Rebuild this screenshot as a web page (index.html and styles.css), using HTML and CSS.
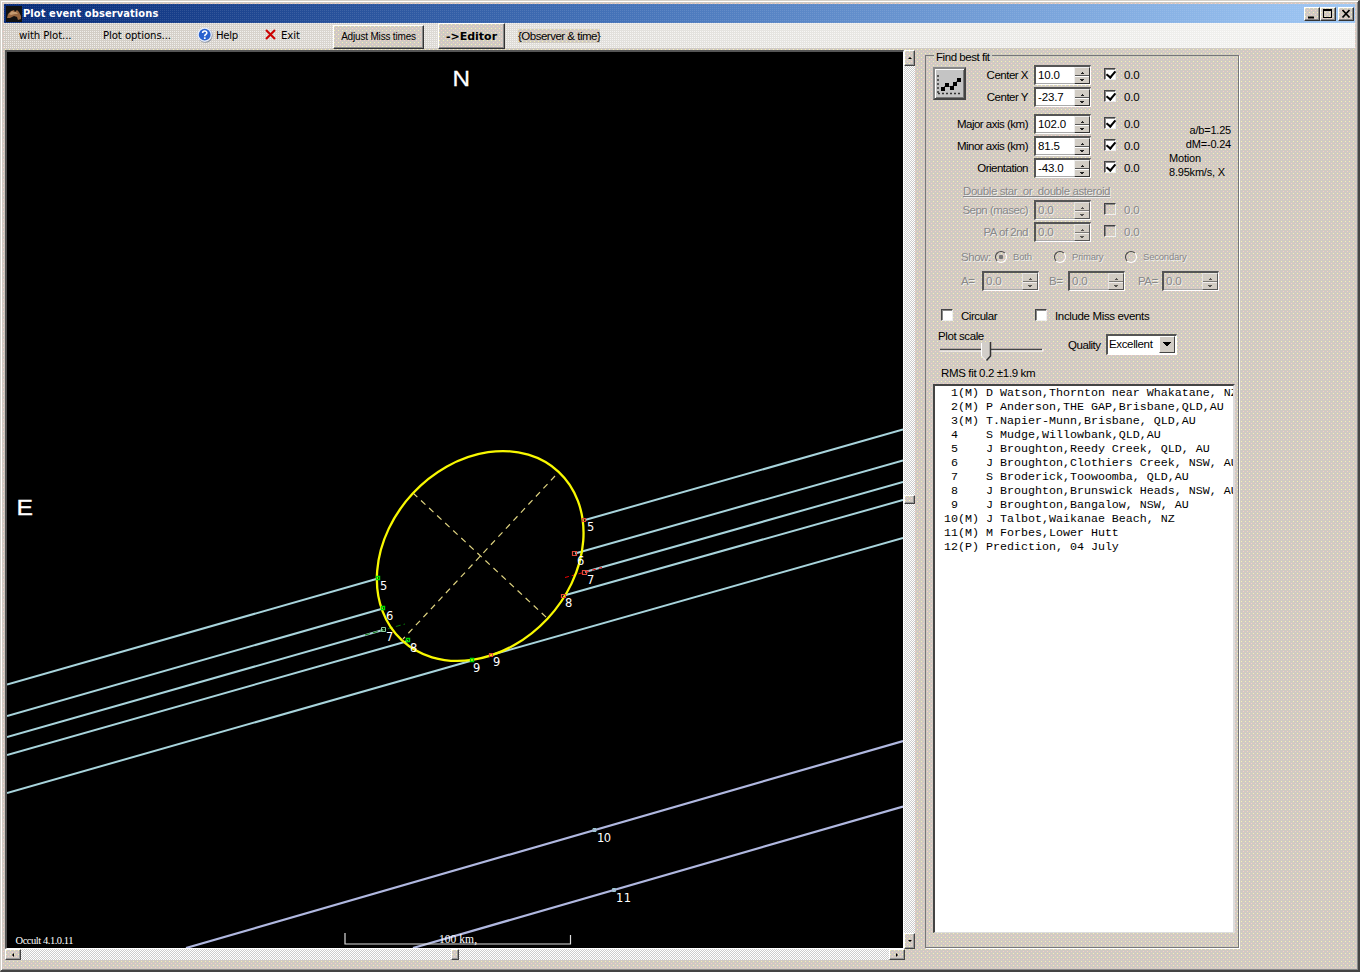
FILE: index.html
```html
<!DOCTYPE html>
<html lang="en">
<head>
<meta charset="utf-8">
<title>Plot event observations</title>
<link rel="stylesheet" href="styles.css">
</head>
<body>
<div class="window dither">
  <header class="titlebar">
    <svg class="app-icon" width="16" height="16" viewBox="0 0 16 16"><rect width="16" height="16" fill="#111"/><path d="M1 12 2 8 5 5 8 4 9 6 11 4 13 6 15 10 15 13 12 14 11 11 8 10 4 12Z" fill="#966640"/><path d="M3 8 6 5 8 6 10 6 12 8 9 8 5 9Z" fill="#c49a70"/></svg>
    <h1 class="title">Plot event observations</h1>
    <div class="winbtns">
      <span class="winbtn"><svg width="14" height="12"><path d="M3 8.500h6v2H3z"/></svg></span>
      <span class="winbtn"><svg width="14" height="12"><path d="M2 1h9v9H2zM3 3v6h7V3z" fill-rule="evenodd"/></svg></span>
      <span class="winbtn close"><svg width="14" height="12"><path d="M3.500 2 10.500 9.500M10.500 2 3.500 9.500" stroke="#000" stroke-width="1.800"/></svg></span>
    </div>
  </header>
  <nav class="toolbar">
    <span class="menu m-plot">with Plot...</span>
    <span class="menu m-options">Plot options...</span>
    <svg class="help-icon" width="16" height="16" viewBox="0 0 16 16"><circle cx="8.300" cy="8.500" r="7.300" fill="#8b95a5"/><circle cx="7.700" cy="7.700" r="7.200" fill="#e8eefa"/><circle cx="7.700" cy="7.700" r="5.900" fill="#2a62cf"/><path d="M5.600 6C5.700 3.300 10 3.400 9.800 6 9.700 7.500 7.800 7.500 7.700 9.200" fill="none" stroke="#fff" stroke-width="1.600"/><rect x="6.900" y="10.300" width="1.700" height="1.700" fill="#fff"/></svg>
    <span class="menu m-help">Help</span>
    <svg class="exit-icon" width="11" height="11" viewBox="0 0 11 11"><path d="M1 1 10 10M10 1 1 10" stroke="#c00" stroke-width="2"/></svg>
    <span class="menu m-exit">Exit</span>
    <button class="btn adjust"><span>Adjust Miss times</span></button>
    <button class="btn editor"><span>-&gt;Editor</span></button>
    <span class="observer dither">{Observer &amp; time}</span>
  </nav>
  <main class="main">
    <section class="plotarea">
      <div class="plotrow">
        <svg class="plot" viewBox="7 52 896 896" width="896" height="896">
          <g class="chord">
            <path d="M7 684.500 378 578.500M7 716 383 608.500M7 737 383 630M7 755 408 641M7 793 472 660.500"/>
            <path d="M585 520 903 429.500M575 553.500 903 460.500M585 572 903 482M564 595.500 903 500M491 655 903 538"/>
          </g>
          <path class="miss" d="M186 948 903 741M413 948 903 806.500"/>
          <g class="axes"><path d="M555 476 403 639M413 493 547 618"/></g>
          <path class="err-g" d="M365 635 405 624"/>
          <path class="err-r" d="M565 577.500 602 567.500"/>
          <ellipse class="body-fit" cx="480.200" cy="556" rx="115" ry="92" transform="rotate(-47 480.200 556)"/>
          <g class="mark green"><path d="M376.500 576.500h3v3h-3zM381.500 606.500h3v3h-3zM406.500 638.500h3v3h-3zM470.500 658.500h3v3h-3z"/></g>
          <path class="mark pale" d="M381.500 627.500h4v4h-4z"/>
          <g class="mark red"><path d="M572.500 551.500h4v4h-4zM582.500 570.500h4v4h-4zM561.500 594.500h4v3h-4zM489.500 653.500h3v3h-3zM582.500 518.500h3v3h-3z"/></g>
          <g class="mark grey"><path d="M593 828.500h3v3h-3zM612.500 888.500h3v3h-3z"/></g>
          <g class="num">
            <text x="380" y="590">5</text><text x="386" y="620">6</text><text x="386" y="641">7</text><text x="410" y="652">8</text><text x="473" y="672">9</text>
            <text x="587" y="531">5</text><text x="577" y="565">6</text><text x="587" y="584">7</text><text x="565" y="607">8</text><text x="493" y="666">9</text>
            <text x="597" y="842" textLength="14">10</text><text x="616" y="902" textLength="15">11</text>
          </g>
          <g class="compass"><text x="452.500" y="86" textLength="17.500" lengthAdjust="spacingAndGlyphs">N</text><text x="16.500" y="515" textLength="16.500" lengthAdjust="spacingAndGlyphs">E</text></g>
          <path class="scale" d="M345 933V944H570.500V935"/>
          <text class="serif" x="439" y="943" font-size="11.500" textLength="38">100 km,</text>
          <text class="serif" x="15.500" y="944" font-size="10.500" textLength="58">Occult 4.1.0.11</text>
        </svg>
        <div class="vscroll track">
          <span class="sbtn"><i class="tri up"></i></span><span class="thumb"></span><span class="sbtn"><i class="tri down"></i></span>
        </div>
      </div>
      <div class="hscroll track">
        <span class="sbtn"><i class="tri left"></i></span><span class="thumb"></span><span class="sbtn"><i class="tri right"></i></span>
      </div>
    </section>
    <fieldset class="group">
      <legend class="legend">Find best fit</legend>
      <div class="top">
        <button class="fitbtn"><svg width="28" height="28" viewBox="0 0 28 28"><g stroke="#333" stroke-width="1.500" stroke-dasharray="2 2" fill="none"><path d="M3 5V24M3 23.500H25"/></g><path d="M7 19 12 14 16 18 24 9" fill="none" stroke="#555"/><path d="M6 17h4v4H6zM10 13h4v4h-4zM15 16h4v4h-4zM18 12h4v4h-4zM22 8h4v4h-4z"/></svg></button>
        <div class="fields">
          <div class="row"><label>Center X</label><div class="spin"><b>10.0</b><i></i></div><span class="check on"></span><span class="val">0.0</span></div>
          <div class="row"><label>Center Y</label><div class="spin"><b>-23.7</b><i></i></div><span class="check on"></span><span class="val">0.0</span></div>
        </div>
      </div>
      <div class="axisblock">
        <div class="fields">
          <div class="row"><label>Major axis (km)</label><div class="spin"><b>102.0</b><i></i></div><span class="check on"></span><span class="val">0.0</span></div>
          <div class="row"><label>Minor axis (km)</label><div class="spin"><b>81.5</b><i></i></div><span class="check on"></span><span class="val">0.0</span></div>
          <div class="row"><label>Orientation</label><div class="spin"><b>-43.0</b><i></i></div><span class="check on"></span><span class="val">0.0</span></div>
        </div>
        <div class="motion"><p class="r">a/b=1.25</p><p class="r">dM=-0.24</p><p class="mo">Motion</p><p>8.95km/s, X</p></div>
      </div>
      <div class="disabled">
        <div class="dbl">Double star&nbsp; or&nbsp; double asteroid</div>
        <div class="fields">
          <div class="row"><label>Sepn (masec)</label><div class="spin"><b>0.0</b><i></i></div><span class="check"></span><span class="val">0.0</span></div>
          <div class="row"><label>PA of 2nd</label><div class="spin"><b>0.0</b><i></i></div><span class="check"></span><span class="val">0.0</span></div>
        </div>
        <div class="show"><span class="show-l">Show:</span><i class="radio sel"></i><small class="both">Both</small><i class="radio"></i><small class="prim">Primary</small><i class="radio"></i><small class="sec">Secondary</small></div>
        <div class="abrow"><label class="la">A=</label><div class="spin"><b>0.0</b><i></i></div><label class="lb">B=</label><div class="spin"><b>0.0</b><i></i></div><label class="lp">PA=</label><div class="spin"><b>0.0</b><i></i></div></div>
      </div>
      <div class="opts"><span class="check"></span><span class="circ">Circular</span><span class="check"></span><span class="incl">Include Miss events</span></div>
      <div class="scale-row">
        <div class="slider-box"><div class="ps">Plot scale</div>
          <svg class="slider" width="106" height="20" viewBox="0 0 106 20"><path d="M2 7.500H104" stroke="#444" stroke-width="1.500"/><path d="M2 9H105V7" stroke="#fff" fill="none"/><path d="M43 0H53V15L49 19 43 14Z" fill="#d2cec9"/><path d="M43.500 1V14L48 18.500" fill="none" stroke="#fff"/><path d="M52.500 0V14L48.500 18.500" fill="none" stroke="#333" stroke-width="1.500"/></svg>
        </div>
        <span class="qual">Quality</span>
        <div class="combo"><b>Excellent</b><i></i></div>
      </div>
      <div class="rms">RMS fit 0.2 ±1.9 km</div>
      <pre class="list">  1(M) D Watson,Thornton near Whakatane, NZ
  2(M) P Anderson,THE GAP,Brisbane,QLD,AU
  3(M) T.Napier-Munn,Brisbane, QLD,AU
  4    S Mudge,Willowbank,QLD,AU
  5    J Broughton,Reedy Creek, QLD, AU
  6    J Broughton,Clothiers Creek, NSW, AU
  7    S Broderick,Toowoomba, QLD,AU
  8    J Broughton,Brunswick Heads, NSW, AU
  9    J Broughton,Bangalow, NSW, AU
 10(M) J Talbot,Waikanae Beach, NZ
 11(M) M Forbes,Lower Hutt
 12(P) Prediction, 04 July</pre>
    </fieldset>
  </main>
</div>
</body>
</html>
```
FILE: styles.css
```css
* { box-sizing: border-box; }
body { margin: 0; overflow: hidden; font: 11.5px/14px "Liberation Sans", Arial, sans-serif; letter-spacing: -0.45px; color: #000; }
p, h1, pre { margin: 0; }
label, span, p, h1, b, small, legend { white-space: nowrap; }
i { display: block; }
svg { display: block; flex: none; }
button { font: inherit; letter-spacing: inherit; color: inherit; padding: 0; margin: 0; }

/* 4px dithered face colour used by all window surfaces */
.dither, .btn, .sbtn, .thumb, .winbtn {
  background: #d2cdc5 url("data:image/svg+xml,%3Csvg xmlns='http://www.w3.org/2000/svg' width='4' height='4' shape-rendering='crispEdges'%3E%3Crect width='4' height='4' fill='%23d0cac3'/%3E%3Crect width='1' height='1' fill='%23f6f2b4'/%3E%3Crect x='2' y='2' width='1' height='1' fill='%23f8cec8'/%3E%3C/svg%3E") 0 0 / 4px 4px;
}
.window { width: 1360px; height: 972px; padding: 2px 2px 0 2px; border: 1px solid; border-color: #d4d0c8 #444 #444 #d4d0c8; border-width: 1px 2px 2px 1px; box-shadow: inset 1px 1px #fff, inset -1px -1px #888; }

.titlebar { height: 19px; margin: 1px 1px 0; padding-right: 1px; display: flex; align-items: center;
  background: conic-gradient(from 0deg at 1px 1px, transparent 270deg, rgba(255,255,255,.1) 0) 0 0 / 2px 2px, linear-gradient(90deg, #062a78, #4472b8 45%, #a0c8f4); }
.app-icon { margin: 0 0 0 2px; }
.title { margin-left: 1px; font: bold 11px/18px "DejaVu Sans Condensed", "DejaVu Sans", sans-serif; letter-spacing: 0.1px; color: #fff; }
.winbtns { margin-left: auto; display: flex; }
.winbtn { width: 16px; height: 14px; border: 1px solid; border-color: #fff #333 #333 #fff; box-shadow: inset -1px -1px #888; }
.winbtn.close { margin-left: 2px; }

.toolbar { height: 25px; margin: 0 1px; display: flex; align-items: flex-start;
  background: conic-gradient(from 0deg at 1px 1px, transparent 270deg, rgba(255,255,255,.65) 0) 0 0 / 2px 2px, linear-gradient(90deg, #d0cac2, #e2e0dc 45%, #f3f3f1); }
.menu { margin-top: 5px; font: 11.3px/15px "DejaVu Sans Condensed", sans-serif; letter-spacing: -0.1px; }
.m-plot { width: 84px; margin-left: 15px; }
.m-options { width: 94px; }
.help-icon { margin-top: 4px; }
.m-help { margin-left: 3px; width: 49px; letter-spacing: -0.35px; }
.exit-icon { margin-top: 6px; }
.m-exit { margin-left: 5px; width: 52px; }
.btn { border: 1px solid; border-color: #fff #333 #333 #fff; box-shadow: inset -1px -1px #888; flex: none; }
.adjust { width: 91px; height: 24px; margin-top: 2px; font-size: 10px; letter-spacing: -0.18px; }
.editor { width: 67px; height: 26px; margin-left: 14px; font: bold 11px "DejaVu Sans", sans-serif; letter-spacing: 0; }
.observer { margin: 6px 0 0 13px; letter-spacing: -0.5px; }

.main { display: flex; }
.plotarea { width: 912px; margin: 2px 0 0 2px; }
.plotrow { display: flex; }
.plot { box-sizing: content-box; background: #000; border: 2px solid; border-color: #555 #fff #fff #555; border-right-width: 1px; border-bottom-width: 1px; }
.track { background: conic-gradient(#ccc 25%, #fff 0 50%, #ccc 0 75%, #fff 0) 0 0 / 2px 2px; display: flex; }
.vscroll { width: 11px; height: 899px; flex-direction: column; }
.hscroll { width: 900px; height: 11px; }
.sbtn, .thumb { display: flex; align-items: center; justify-content: center; flex: none; border: 1px solid; border-color: #fff #444 #444 #fff; box-shadow: inset -1px -1px #999; }
.vscroll .sbtn { height: 16px; }
.vscroll .thumb { height: 9px; margin: 429px 0; }
.hscroll .sbtn { width: 16px; }
.hscroll .thumb { width: 8px; margin: 0 430px; }
.tri { border: 2px solid transparent; width: 0; height: 0; }
.up { border-bottom-color: #000; border-top: 0; }
.down { border-top-color: #000; border-bottom: 0; }
.left { border-right-color: #000; border-left: 0; }
.right { border-left-color: #000; border-right: 0; }

.chord path { stroke: #a8d4dc; stroke-width: 2; }
.miss { stroke: #b0b8e0; stroke-width: 2.2; }
.axes path { stroke: #e0d480; stroke-width: 1.2; stroke-dasharray: 6 5; }
.err-g { stroke: #087808; stroke-dasharray: 5 3; }
.err-r { stroke: #e00; stroke-dasharray: 4 3; }
.body-fit { fill: none; stroke: #f8f800; stroke-width: 2.3; }
.mark { fill: none; }
.green { stroke: #00d800; stroke-width: 1.4; }
.pale { stroke: #8fd0a0; }
.red { stroke: #e04838; stroke-width: 1.2; }
.grey { stroke: #9cc8d0; }
.num { fill: #fff; font: 11.5px "DejaVu Sans", sans-serif; letter-spacing: 0; }
.compass { fill: #fff; stroke: #fff; stroke-width: .3; font: 22.5px "Liberation Sans", sans-serif; letter-spacing: 0; }
.scale { fill: none; stroke: #ddd; stroke-width: 1.2; }
.serif { fill: #fff; font-family: "Liberation Serif", serif; letter-spacing: 0; }

.group { width: 314px; height: 900px; margin: 0 0 0 8px; padding: 0; min-width: 0; border: 2px groove; border-color: #777 #fff #fff #777; border-style: solid; border-width: 1px; outline: 0; display: block; border-color: #777; box-shadow: 1px 1px #fff; }
.legend { padding: 0 2px; margin-left: 8px; height: 14px; line-height: 18px; background: linear-gradient(#d2cdc5 0 0) 0 5px / 100% 5px no-repeat; }
.top { display: flex; height: 49px; margin-top: 3px; }
.fitbtn { width: 33px; height: 33px; margin: 2px 0 0 7px; border: 2px solid; border-color: #888 #444 #444 #888; background: #c4c4c4; box-shadow: inset 1px 1px #fff, inset -1px -1px #777; }
.fields { display: flex; flex-direction: column; gap: 2px; }
.row { display: flex; height: 20px; align-items: center; }
.row label { width: 102px; text-align: right; margin-right: 6px; letter-spacing: -0.5px; }
.top .row label { width: 62px; }
.row .check { margin: -3px 8px 0 13px; }
.val { letter-spacing: -0.2px; }
.spin { width: 57px; height: 20px; flex: none; background: #fff; border: 2px solid; border-color: #555 #fff #fff #555; border-width: 2px 1px 1px 2px; display: flex; box-shadow: inset -1px -1px #aaa; }
.spin b, .combo b { font-weight: normal; flex: 1; padding: 1px 0 0 2px; letter-spacing: -0.15px; }
.spin i { width: 16px; height: 17px; border: 1px solid; border-color: #eee #333 #333 #eee;
  background:
    conic-gradient(from 135deg at 50% 0, #222 90deg, transparent 0) 5px 4px / 4px 2px no-repeat,
    conic-gradient(from -45deg at 50% 100%, #222 90deg, transparent 0) 5px 11px / 4px 2px no-repeat,
    linear-gradient(#555 0 0) 0 7px / 100% 1px no-repeat, linear-gradient(#fff 0 0) 0 8px / 100% 1px no-repeat, #d2cdc5; }
.check { width: 12px; height: 12px; flex: none; background: #fff; border: 1px solid; border-color: #444 #eee #eee #444; box-shadow: inset 1px 1px #888; display: block; position: relative; }
.check.on::after { content: ""; position: absolute; left: 3px; top: 0; width: 4px; height: 7px; border: solid #000; border-width: 0 2px 2px 0; transform: rotate(40deg); }
.axisblock { display: flex; justify-content: space-between; }
.motion { width: 62px; margin: 10px 7px 0 0; font-size: 11px; line-height: 13.5px; letter-spacing: -0.2px; }
.motion .r { text-align: right; }
.motion .mo { margin-top: 1px; }

.disabled { color: #888; text-shadow: 1px 1px #eee; }
.disabled .spin, .disabled .check { background: transparent; }
.disabled .spin i { filter: opacity(.7); }
.dbl { margin: 5px 0 2px 37px; text-decoration: underline; letter-spacing: -0.42px; }
.show { display: flex; height: 14px; margin-top: 8px; align-items: center; }
.show-l { margin-left: 35px; width: 34px; }
.radio { width: 12px; height: 12px; border-radius: 50%; border: 1.5px solid; border-color: #444 #fff #fff #444; flex: none; }
.radio.sel { background: radial-gradient(circle, #777 0 2px, transparent 2.5px); }
.show small { font-size: 9.5px; letter-spacing: -0.2px; margin-left: 6px; }
.both { width: 41px; } .prim { width: 53px; }
.abrow { display: flex; margin-top: 7px; height: 20px; align-items: center; }
.la { margin-left: 35px; width: 21px; } .lb { margin-left: 10px; width: 19px; } .lp { margin-left: 13px; width: 24px; }
.opts { display: flex; margin-top: 18px; height: 14px; align-items: center; }
.opts .check { margin: -3px 0 0 15px; }
.circ { margin-left: 8px; width: 59px; }
.incl { margin-left: 8px; letter-spacing: -0.35px; }
.scale-row { display: flex; height: 34px; margin-top: 6px; }
.slider-box { width: 130px; padding-left: 12px; }
.ps { letter-spacing: -0.4px; }
.slider { margin-top: -1px; }
.qual { margin: 9px 0 0 12px; width: 38px; }
.combo { width: 71px; height: 21px; margin-top: 5px; border: 2px solid; border-color: #555 #fff #fff #555; border-width: 2px 1px 1px 2px; background: #fff; display: flex; }
.combo b { padding-left: 1px; letter-spacing: -0.35px; }
.combo i { width: 16px; height: 17px; margin-right: 1px; border: 1px solid; border-color: #fff #444 #444 #fff; background: conic-gradient(from -45deg at 50% 100%, #000 90deg, transparent 0) 3px 5px / 8px 4px no-repeat, #d2cdc5; }
.rms { margin: 3px 0 4px 15px; letter-spacing: -0.35px; }
.list { margin-left: 7px; width: 302px; height: 549px; padding: 0 0 0 2px; overflow: hidden; background: #fff; border: 2px solid; border-color: #444 #ddd #ddd #444; border-bottom-width: 1px; font: 11.67px/14px "Liberation Mono", monospace; letter-spacing: 0; }
```
